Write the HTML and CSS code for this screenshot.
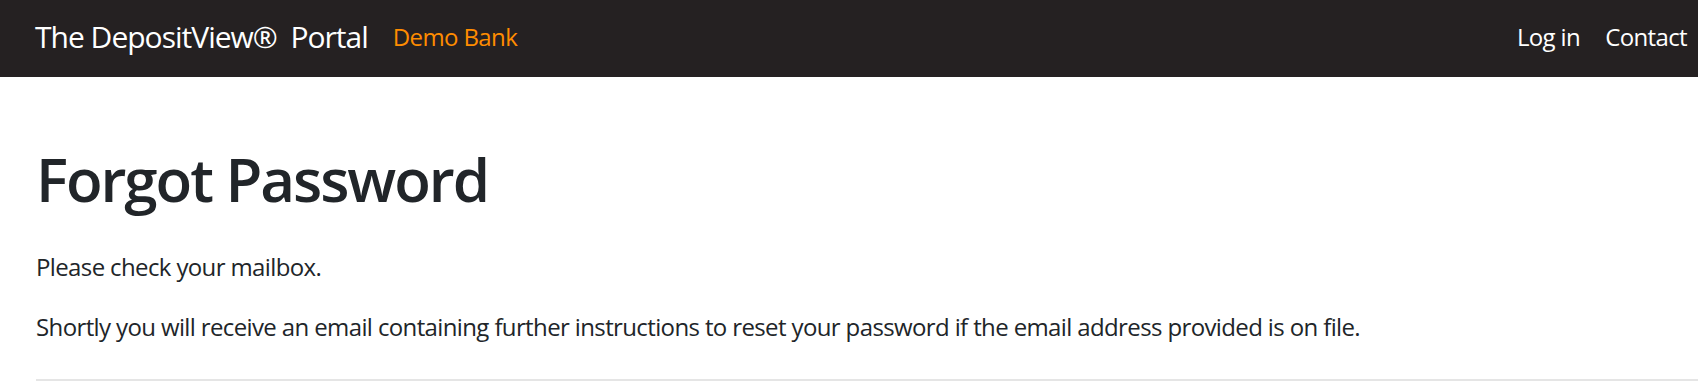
FILE: index.html
```html
<!DOCTYPE html>
<html lang="en">
<head>
<meta charset="utf-8">
<title>Forgot Password - The DepositView® Portal</title>
<link rel="stylesheet" href="styles.css">
</head>
<body>
<header class="navbar">
  <a class="brand" href="#">The DepositView®&nbsp; Portal</a>
  <span class="bank">Demo Bank</span>
  <nav class="nav">
    <a class="nav-link" href="#">Log in</a>
    <a class="nav-link" href="#">Contact</a>
  </nav>
</header>
<main class="content">
  <h1 class="title">Forgot Password</h1>
  <p class="text">Please check your mailbox.</p>
  <p class="text">Shortly you will receive an email containing further instructions to reset your password if the email address provided is on file.</p>
  <hr class="rule">
</main>
</body>
</html>
```
FILE: styles.css
```css
* { box-sizing: border-box; }
html, body { margin: 0; padding: 0; }
body {
  font-family: "Open Sans", "Noto Sans", "Liberation Sans", sans-serif;
  color: #212529;
  background: #fff;
  font-size: 24px;
  line-height: 1.5;
  letter-spacing: -0.026em;
}
a { text-decoration: none; }

.navbar {
  display: flex;
  align-items: center;
  height: 77px;
  padding: 0 11px 4px 35px;
  background: #252122;
}
.brand {
  color: #fff;
  font-size: 30px;
  line-height: 1;
  letter-spacing: -0.033em;
  margin-right: 25px;
}
.bank {
  color: #ff8c00;
  font-size: 24px;
}
.nav {
  display: flex;
  margin-left: auto;
  gap: 25px;
}
.nav-link {
  color: #fff;
  font-size: 24px;
}

.content {
  padding: 0 0 0 36px;
}
.title {
  margin: 66px 0 34px;
  font-size: 60px;
  font-weight: 600;
  line-height: 1.2;
  letter-spacing: -0.034em;
}
.text {
  margin: 0 0 24px;
}
.rule {
  margin: 34px 0 0;
  border: 0;
  border-top: 2px solid #e5e5e5;
}
```
